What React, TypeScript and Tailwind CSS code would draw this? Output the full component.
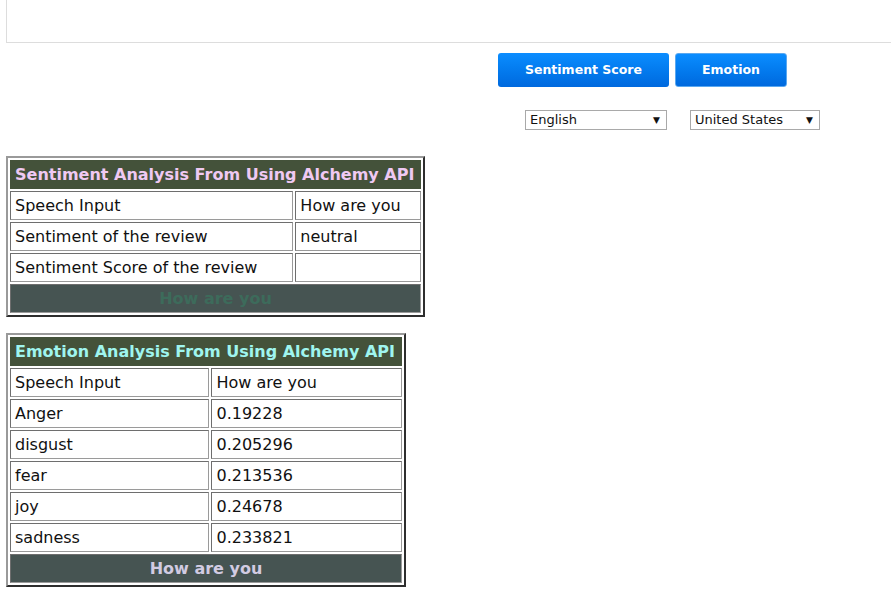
import React from 'react';

const font = { fontFamily: '"DejaVu Sans", Verdana, sans-serif' };

type Row = [string, string];

const FakeSelect: React.FC<{ label: string; className: string }> = ({ label, className }) => (
  <div
    className={`h-[20px] border border-[#a9a9a9] bg-white flex items-center justify-between pl-[4px] pr-[6px] text-[13px] text-[#111] ${className}`}
  >
    <span>{label}</span>
    <span className="text-[9px] leading-none">▼</span>
  </div>
);

const ResultTable: React.FC<{
  title: string;
  titleColor: string;
  rows: Row[];
  footer: string;
  footerColor: string;
  widths: [string, string];
  tableWidth: string;
}> = ({ title, titleColor, rows, footer, footerColor, widths, tableWidth }) => (
  <table
    className={`${tableWidth} border-separate border-spacing-[2px] border-2 border-t-[#9a9a9a] border-l-[#9a9a9a] border-b-[#2e2e2e] border-r-[#2e2e2e]`}
  >
    <tbody>
      <tr>
        <th
          colSpan={2}
          className={`h-[29px] bg-[#44523a] border border-[#44523a] text-left pl-[4px] text-[16px] font-bold whitespace-nowrap ${titleColor}`}
        >
          {title}
        </th>
      </tr>
      {rows.map(([a, b]) => (
        <tr key={a}>
          <td className={`${widths[0]} h-[29px] border border-t-[#6e6e6e] border-l-[#6e6e6e] border-b-[#9a9a9a] border-r-[#9a9a9a] pl-[4px] text-[16px] text-[#111] whitespace-nowrap`}>
            {a}
          </td>
          <td className={`${widths[1]} h-[29px] border border-t-[#6e6e6e] border-l-[#6e6e6e] border-b-[#9a9a9a] border-r-[#9a9a9a] pl-[4px] text-[16px] text-[#111] whitespace-nowrap`}>
            {b}
          </td>
        </tr>
      ))}
      <tr>
        <td
          colSpan={2}
          className={`h-[29px] bg-[#465452] border border-t-[#6e6e6e] border-l-[#6e6e6e] border-b-[#9a9a9a] border-r-[#9a9a9a] text-center text-[16px] font-bold ${footerColor}`}
        >
          {footer}
        </td>
      </tr>
    </tbody>
  </table>
);

export default function App() {
  return (
    <div className="min-h-screen bg-white" style={font}>
      <div className="ml-[6px] h-[43px] border-l border-b border-[#dddddd]" />

      <div className="flex mt-[10px] pl-[498px] gap-[6px]">
        <button className="w-[171px] h-[34px] rounded-[3px] bg-gradient-to-b from-[#0b8dff] to-[#0069de] text-white text-[12.5px] font-bold">
          Sentiment Score
        </button>
        <button className="w-[112px] h-[34px] rounded-[3px] border border-[#5aa8f0] bg-gradient-to-b from-[#0b8dff] to-[#0069de] text-white text-[12.5px] font-bold">
          Emotion
        </button>
      </div>

      <div className="flex mt-[23px] pl-[525px] gap-[23px]">
        <FakeSelect label="English" className="w-[142px]" />
        <FakeSelect label="United States" className="w-[130px]" />
      </div>

      <div className="pl-[6px] mt-[26px]">
        <ResultTable
          title="Sentiment Analysis From Using Alchemy API"
          titleColor="text-[#efc9f3]"
          rows={[
            ['Speech Input', 'How are you'],
            ['Sentiment of the review', 'neutral'],
            ['Sentiment Score of the review', ''],
          ]}
          footer="How are you"
          footerColor="text-[#3d6b5b]"
          widths={['w-[284px]', 'w-[126px]']}
          tableWidth="w-[419px]"
        />
      </div>

      <div className="pl-[6px] mt-[16px]">
        <ResultTable
          title="Emotion Analysis From Using Alchemy API"
          titleColor="text-[#9ff5ef]"
          rows={[
            ['Speech Input', 'How are you'],
            ['Anger', '0.19228'],
            ['disgust', '0.205296'],
            ['fear', '0.213536'],
            ['joy', '0.24678'],
            ['sadness', '0.233821'],
          ]}
          footer="How are you"
          footerColor="text-[#d2cbe2]"
          widths={['w-[200px]', 'w-[191px]']}
          tableWidth="w-[400px]"
        />
      </div>
    </div>
  );
}
